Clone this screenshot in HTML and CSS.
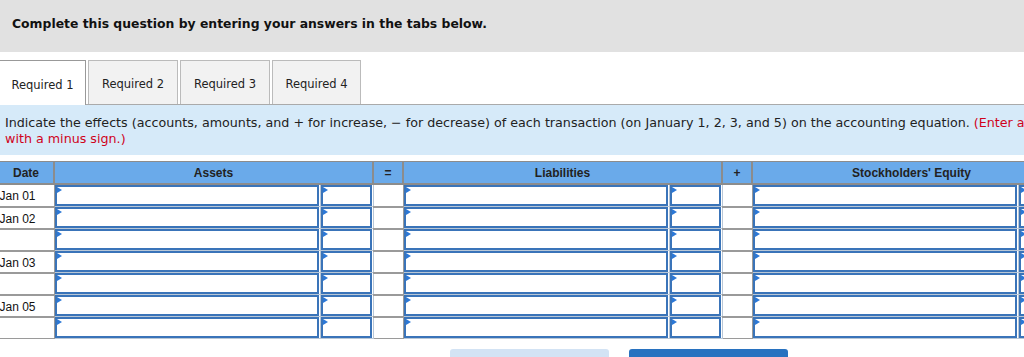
FILE: index.html
```html
<!DOCTYPE html>
<html lang="en">
<head>
    <meta charset="UTF-8">
    <meta name="viewport" content="width=device-width, initial-scale=1.0">
    <title>Accounting Equation</title>
    <link rel="stylesheet" href="styles.css">
</head>
<body>
    <div class="page">
        <div class="banner">Complete this question by entering your answers in the tabs below.</div>

        <div class="tabs">
            <div class="tab active">Required 1</div>
            <div class="tab">Required 2</div>
            <div class="tab">Required 3</div>
            <div class="tab">Required 4</div>
        </div>

        <div class="info">
            Indicate the effects (accounts, amounts, and + for increase, &minus; for decrease) of each transaction (on January 1, 2, 3, and 5) on the accounting equation.
            <span class="note">(Enter any decreases to account balances<br>with a minus sign.)</span>
        </div>

        <table class="sheet">
            <colgroup>
                <col class="c-date">
                <col class="c-wide"><col class="c-small">
                <col class="c-sign">
                <col class="c-wide"><col class="c-small">
                <col class="c-sign">
                <col class="c-wide"><col class="c-small">
            </colgroup>
            <thead>
                <tr>
                    <th>Date</th>
                    <th colspan="2">Assets</th>
                    <th>=</th>
                    <th colspan="2">Liabilities</th>
                    <th>+</th>
                    <th colspan="2">Stockholders' Equity</th>
                </tr>
            </thead>
            <tbody id="rows"></tbody>
        </table>

        <div class="actions">
            <button class="btn prev"></button>
            <button class="btn next"></button>
        </div>
    </div>

    <script>
        const dates = ["Jan 01", "Jan 02", "", "Jan 03", "", "Jan 05", ""];
        const body = document.getElementById("rows");

        function field() {
            return '<td class="in"><div class="box"><span class="flag"></span></div></td>';
        }

        dates.forEach(d => {
            const tr = document.createElement("tr");
            tr.innerHTML =
                '<td class="date">' + d + '</td>' +
                field() + field() + '<td class="sign"></td>' +
                field() + field() + '<td class="sign"></td>' +
                field() + field();
            body.appendChild(tr);
        });
    </script>
</body>
</html>
```

FILE: styles.css
```css
body {
    margin: 0;
    overflow: hidden;
    background: #fff;
    font-family: "DejaVu Sans", Verdana, sans-serif;
    color: #222;
}

.page {
    width: 1440px;
}

.banner {
    height: 52px;
    box-sizing: border-box;
    padding: 16px 12px 0;
    background: #e1e1e1;
    font-size: 12.4px;
    font-weight: bold;
    color: #111;
}

.tabs {
    display: flex;
    gap: 2px;
    margin-top: 8px;
    border-bottom: 1px solid #aaa;
}

.tab {
    height: 44px;
    box-sizing: border-box;
    padding: 3px 10px 0;
    display: flex;
    align-items: center;
    justify-content: center;
    background: #f2f2f2;
    border: 1px solid #bbb;
    border-bottom: none;
    font-size: 11.5px;
    color: #222;
}

.tab:nth-child(1) { width: 87px; }
.tab:nth-child(2) { width: 90px; }
.tab:nth-child(3) { width: 90px; }
.tab:nth-child(4) { width: 89px; }

.tab.active {
    background: #fff;
    border-color: #999;
    height: 45px;
    margin-bottom: -1px;
    margin-left: -1px;
}

.info {
    background: #d6eaf9;
    padding: 10px 5px 8px;
    font-size: 12.7px;
    line-height: 16px;
    color: #222;
    white-space: nowrap;
}

.note {
    color: #d0021b;
}

.sheet {
    margin-top: 6px;
    margin-left: -3px;
    border-collapse: collapse;
    table-layout: fixed;
    font-family: "Liberation Sans", Arial, sans-serif;
    font-size: 12px;
}

.c-date { width: 56px; }
.c-wide { width: 266px; }
.c-small { width: 53px; }
.c-sign { width: 30px; }

.sheet th {
    height: 21px;
    padding: 0;
    background: #6aaaea;
    border: 2px solid #8c8c8c;
    border-top-width: 1px;
    font-weight: bold;
    color: #222;
    text-align: center;
}

.sheet td {
    padding: 0;
    border: 1px solid #9a9a9a;
    border-top-width: 2px;
    border-left-color: #7a7a7a;
}

.sheet td.date {
    padding: 3px 0 0 1px;
    line-height: 16px;
    color: #111;
    vertical-align: top;
}

.sheet td.in {
    border-color: #b9c7d6;
    border-top: 1px solid #b9c7d6;
    padding: 0 1px 0 0;
}

.box {
    position: relative;
    height: 17px;
    border: 2px solid #3a74b9;
    background: #fff;
}

.flag {
    position: absolute;
    top: 0;
    left: 0;
    width: 0;
    height: 0;
    border-top: 3px solid transparent;
    border-bottom: 3px solid transparent;
    border-left: 5px solid #2c78d6;
}

.actions {
    display: flex;
    gap: 20px;
    padding-left: 450px;
    margin-top: 10px;
}

.btn {
    width: 159px;
    height: 30px;
    border: none;
    border-radius: 3px;
}

.btn.prev { background: #d3e3f4; }
.btn.next { background: #2872c0; }
```
